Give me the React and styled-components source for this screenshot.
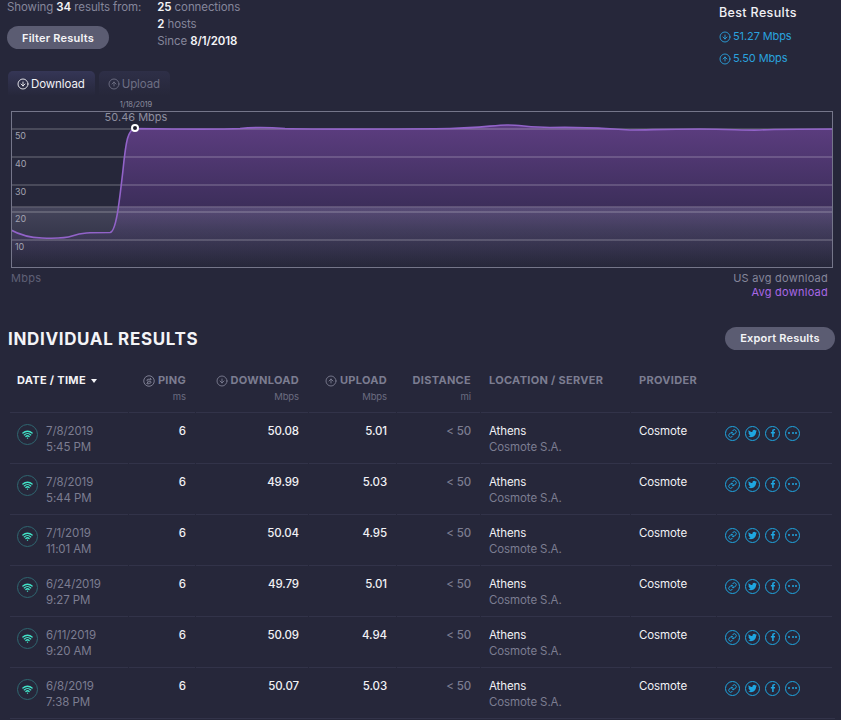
import styled, { createGlobalStyle } from "styled-components";
import { CircleArrowDown, CircleArrowUp, Link, Wifi } from "lucide-react";
import { FaTwitter, FaFacebookF } from "react-icons/fa";

const results = [
  { date: "7/8/2019", time: "5:45 PM", down: "50.08", up: "5.01" },
  { date: "7/8/2019", time: "5:44 PM", down: "49.99", up: "5.03" },
  { date: "7/1/2019", time: "11:01 AM", down: "50.04", up: "4.95" },
  { date: "6/24/2019", time: "9:27 PM", down: "49.79", up: "5.01" },
  { date: "6/11/2019", time: "9:20 AM", down: "50.09", up: "4.94" },
  { date: "6/8/2019", time: "7:38 PM", down: "50.07", up: "5.03" },
];

const curve =
  "M11 230 C20 235 28 237.5 42 238 C55 238.5 65 238.5 72 236 C82 232.5 88 232.5 110 232.5 C116 232 119 205 123 170 C126 140 128 130 135 128.5 C170 129 220 129.5 240 128.5 C255 127 265 127 285 128.5 C320 129.5 400 129 450 128.5 C480 128 495 125 507 125 C520 125 530 127.5 550 127.5 C580 127 600 127.5 630 130 C650 130 660 129 700 129 C730 129 745 130.5 760 130 C780 129 800 129 832 129";

const grid = [
  { y: 129, label: "50" },
  { y: 157, label: "40" },
  { y: 185, label: "30" },
  { y: 212, label: "20" },
  { y: 240, label: "10" },
];

function PingIcon() {
  return (
    <svg width="12" height="12" viewBox="0 0 24 24" fill="none" stroke="currentColor" strokeWidth="2">
      <circle cx="12" cy="12" r="10.5" />
      <path d="M16 8.5H10a2 2 0 0 0 0 4h4a2 2 0 0 1 0 4H8M14 6l2.5 2.5L14 11M10 14l-2.5 2.5L10 19" />
    </svg>
  );
}

function Chart() {
  return (
    <ChartBox>
      <ChartSvg viewBox="11 111 822 157">
        <defs>
          <linearGradient id="purple" x1="0" y1="125" x2="0" y2="267" gradientUnits="userSpaceOnUse">
            <stop offset="0" stopColor="#5c3d80" />
            <stop offset="0.58" stopColor="#3c2e5a" />
            <stop offset="0.74" stopColor="#302a4a" />
            <stop offset="1" stopColor="#26273a" />
          </linearGradient>
          <linearGradient id="usavg" x1="0" y1="207" x2="0" y2="267" gradientUnits="userSpaceOnUse">
            <stop offset="0" stopColor="#dcd9ff" stopOpacity="0.17" />
            <stop offset="1" stopColor="#dcd9ff" stopOpacity="0" />
          </linearGradient>
        </defs>
        <path d={`${curve} V267 H11 Z`} fill="url(#purple)" />
        <rect x="11" y="207" width="821" height="60" fill="url(#usavg)" />
        <rect x="11" y="206" width="821" height="1.5" fill="#fff" opacity="0.18" />
        {grid.map(g => (
          <g key={g.y}>
            <rect x="11" y={g.y - 0.75} width="821" height="1.5" fill="#fff" opacity="0.22" />
            <GridLabel x="15" y={g.y + 10}>{g.label}</GridLabel>
          </g>
        ))}
        <path d={curve} fill="none" stroke="#9263c9" strokeWidth="1.6" />
        <rect x="11.5" y="111.5" width="821" height="156" fill="none" stroke="#75768a" strokeWidth="1" />
        <circle cx="135" cy="128" r="3" fill="#1c1c2a" stroke="#fff" strokeWidth="2" />
      </ChartSvg>
      <Marker>
        <MarkerDate>1/18/2019</MarkerDate>
        <MarkerValue>50.46 Mbps</MarkerValue>
      </Marker>
    </ChartBox>
  );
}

function ResultRow({ item }) {
  return (
    <>
      <DateCell>
        <WifiBadge>
          <Wifi size={11} strokeWidth={3} />
        </WifiBadge>
        <div>
          <GreyLine>{item.date}</GreyLine>
          <GreyLine>{item.time}</GreyLine>
        </div>
      </DateCell>
      <NumberCell>6</NumberCell>
      <NumberCell>{item.down}</NumberCell>
      <NumberCell>{item.up}</NumberCell>
      <NumberCell $muted>&lt; 50</NumberCell>
      <TextCell>
        <div>Athens</div>
        <GreyLine>Cosmote S.A.</GreyLine>
      </TextCell>
      <TextCell>Cosmote</TextCell>
      <ActionCell>
        <ShareIcon><Link size={9} strokeWidth={2.6} /></ShareIcon>
        <ShareIcon><FaTwitter size={9} /></ShareIcon>
        <ShareIcon><FaFacebookF size={8} /></ShareIcon>
        <ShareIcon><Dots><i /><i /><i /></Dots></ShareIcon>
      </ActionCell>
    </>
  );
}

export default function App() {
  return (
    <>
      <GlobalStyle />
      <Page>
        <Top>
          <Summary>
            <FilterColumn>
              <SummaryLine>
                Showing <b>34</b> results from:
              </SummaryLine>
              <FilterButton>Filter Results</FilterButton>
            </FilterColumn>
            <div>
              <SummaryLine><b>25</b> connections</SummaryLine>
              <SummaryLine><b>2</b> hosts</SummaryLine>
              <SummaryLine>Since <b>8/1/2018</b></SummaryLine>
            </div>
          </Summary>
          <Best>
            <BestTitle>Best Results</BestTitle>
            <BestValue><CircleArrowDown size={12} strokeWidth={1.8} />51.27 Mbps</BestValue>
            <BestValue><CircleArrowUp size={12} strokeWidth={1.8} />5.50 Mbps</BestValue>
          </Best>
        </Top>

        <Tabs>
          <Tab $active><CircleArrowDown size={12} strokeWidth={1.8} />Download</Tab>
          <Tab><CircleArrowUp size={12} strokeWidth={1.8} />Upload</Tab>
        </Tabs>

        <Chart />

        <Legend>
          <span>Mbps</span>
          <LegendRight>
            <div>US avg download</div>
            <AvgLabel>Avg download</AvgLabel>
          </LegendRight>
        </Legend>

        <SectionHead>
          <Title>INDIVIDUAL RESULTS</Title>
          <ExportButton>Export Results</ExportButton>
        </SectionHead>

        <Table>
          <HeadCell $active>
            <HeadLabel>DATE / TIME <Caret /></HeadLabel>
          </HeadCell>
          <HeadCell $right>
            <HeadLabel $right><PingIcon />PING</HeadLabel>
            <Unit>ms</Unit>
          </HeadCell>
          <HeadCell $right>
            <HeadLabel $right><CircleArrowDown size={12} strokeWidth={1.8} />DOWNLOAD</HeadLabel>
            <Unit>Mbps</Unit>
          </HeadCell>
          <HeadCell $right>
            <HeadLabel $right><CircleArrowUp size={12} strokeWidth={1.8} />UPLOAD</HeadLabel>
            <Unit>Mbps</Unit>
          </HeadCell>
          <HeadCell $right>
            <HeadLabel $right>DISTANCE</HeadLabel>
            <Unit>mi</Unit>
          </HeadCell>
          <HeadCell $pad>
            <HeadLabel>LOCATION / SERVER</HeadLabel>
          </HeadCell>
          <HeadCell $pad>
            <HeadLabel>PROVIDER</HeadLabel>
          </HeadCell>
          <HeadCell />
          {results.map((item, i) => (
            <ResultRow item={item} key={i} />
          ))}
        </Table>
      </Page>
    </>
  );
}

const GlobalStyle = createGlobalStyle`
  html, body {
    margin: 0;
    height: 720px;
    overflow: hidden;
    background: #26273a;
  }
  body {
    font-family: Inter, "Liberation Sans", sans-serif;
    font-size: 11.5px;
    letter-spacing: -0.1px;
    color: #f1f1f5;
  }
`;

const Page = styled.div`
  padding: 0 6px 0 7px;
  margin-top: -1px;
`;

const Top = styled.div`
  display: flex;
  justify-content: space-between;
  height: 72px;
`;

const Summary = styled.div`
  display: flex;
  gap: 16px;
`;

const FilterColumn = styled.div`
  display: flex;
  flex-direction: column;
  align-items: flex-start;
`;

const SummaryLine = styled.div`
  line-height: 17px;
  color: #85869a;

  b {
    color: #f4f4f7;
    font-weight: 600;
  }
`;

const Pill = styled.button`
  border: none;
  color: #f4f4f7;
  font: 600 11px Inter, sans-serif;
  letter-spacing: 0.2px;
  border-radius: 12px;
  background: #5b5c72;
  padding: 0;
`;

const FilterButton = styled(Pill)`
  width: 102px;
  height: 23px;
  margin-top: 10px;
`;

const Best = styled.div`
  width: 116px;
  margin-top: 6px;
`;

const BestTitle = styled.div`
  font-size: 12.5px;
  font-weight: 500;
  line-height: 16px;
  letter-spacing: 0.35px;
  margin-bottom: 8px;
`;

const BestValue = styled.div`
  display: flex;
  align-items: center;
  gap: 2px;
  color: #2aa2de;
  font-size: 11px;
  line-height: 15px;
  margin-bottom: 7px;
`;

const Tabs = styled.div`
  display: flex;
  gap: 4px;
  height: 25px;
  margin-left: 1px;
`;

const Tab = styled.div`
  display: flex;
  align-items: center;
  gap: 2px;
  padding: 0 10px 0 9px;
  border-radius: 5px 5px 0 0;
  color: ${p => (p.$active ? "#f1f1f5" : "#6e6f84")};
  background: linear-gradient(${p => (p.$active ? "#353656" : "#2e2f47")}, #26273a);
  font-size: 11.5px;
`;

const ChartBox = styled.div`
  position: relative;
  margin: 15px 1px 0 4px;
  height: 157px;
`;

const ChartSvg = styled.svg`
  display: block;
  width: 822px;
  height: 157px;
`;

const GridLabel = styled.text`
  font: 9px Inter, sans-serif;
  fill: #a2a3b1;
`;

const Marker = styled.div`
  position: absolute;
  left: 93px;
  top: -11px;
  width: 64px;
  text-align: center;
  color: #8d8e9f;
`;

const MarkerDate = styled.div`
  font-size: 7.5px;
  line-height: 10px;
`;

const MarkerValue = styled.div`
  font-size: 11px;
  line-height: 14px;
  letter-spacing: 0;
  white-space: nowrap;
`;

const Legend = styled.div`
  display: flex;
  justify-content: space-between;
  margin: 3px 7px 0 4px;
  font-size: 11px;
  line-height: 14px;
  letter-spacing: 0.25px;
  color: #5f6076;
`;

const LegendRight = styled.div`
  text-align: right;
  color: #85869a;
`;

const AvgLabel = styled.div`
  color: #a968e6;
`;

const SectionHead = styled.div`
  display: flex;
  justify-content: space-between;
  align-items: center;
  margin-top: 27px;
  height: 24px;
`;

const Title = styled.h2`
  margin: 2px 0 0 1px;
  font-size: 17px;
  font-weight: 700;
  letter-spacing: 0.65px;
  color: #f4f4f7;
`;

const ExportButton = styled(Pill)`
  width: 110px;
  height: 23px;
`;

const Table = styled.div`
  display: grid;
  grid-template-columns: 119px 67px 113px 88px 84px 150px 86px 116px;
  grid-auto-rows: 51px;
  margin: 11px 0 0 3px;
  border-bottom: 1px solid #323349;
`;

const HeadCell = styled.div`
  height: 53px;
  margin-top: -2px;
  padding: ${p => (p.$pad ? "14px 0 0 8px" : p.$right ? "14px 10px 0 0" : "14px 0 0 7px")};
  text-align: ${p => (p.$right ? "right" : "left")};
  color: ${p => (p.$active ? "#f4f4f7" : "#7c7d91")};
`;

const HeadLabel = styled.div`
  display: flex;
  justify-content: ${p => (p.$right ? "flex-end" : "flex-start")};
  align-items: center;
  gap: 3px;
  font-size: 11px;
  font-weight: 700;
  line-height: 15px;
  letter-spacing: 0.3px;
  white-space: nowrap;
`;

const Unit = styled.div`
  font-size: 9.5px;
  line-height: 16px;
  margin-top: 1px;
  color: #6b6c80;
`;

const Caret = styled.span`
  display: inline-block;
  margin-left: 2px;
  border: 3px solid transparent;
  border-top: 4px solid #f4f4f7;
  border-bottom: none;
`;

const Cell = styled.div`
  border-top: 1px solid #323349;
  margin-right: 1px;
  padding-top: 9.5px;
  line-height: 16.5px;
`;

const DateCell = styled(Cell)`
  display: flex;
  gap: 8px;
  padding-left: 7px;
`;

const WifiBadge = styled.span`
  display: flex;
  align-items: center;
  justify-content: center;
  width: 21px;
  height: 21px;
  box-sizing: border-box;
  margin-top: 1px;
  border-radius: 50%;
  border: 1px solid #2f6670;
  color: #42e3c8;
`;

const GreyLine = styled.div`
  color: #7c7d91;
`;

const NumberCell = styled(Cell)`
  padding-right: 9px;
  text-align: right;
  font-weight: 500;
  color: ${p => (p.$muted ? "#7c7d91" : "#f1f1f5")};
`;

const TextCell = styled(Cell)`
  padding-left: 8px;
`;

const ActionCell = styled(Cell)`
  display: flex;
  gap: 5px;
  padding-left: 8px;
  padding-top: 12.5px;
`;

const ShareIcon = styled.span`
  display: flex;
  align-items: center;
  justify-content: center;
  width: 15px;
  height: 15px;
  box-sizing: border-box;
  border: 1.5px solid #1fa6e0;
  border-radius: 50%;
  color: #1fa6e0;
`;

const Dots = styled.span`
  display: flex;
  gap: 1.5px;

  i {
    width: 2px;
    height: 2px;
    border-radius: 50%;
    background: #1fa6e0;
  }
`;
